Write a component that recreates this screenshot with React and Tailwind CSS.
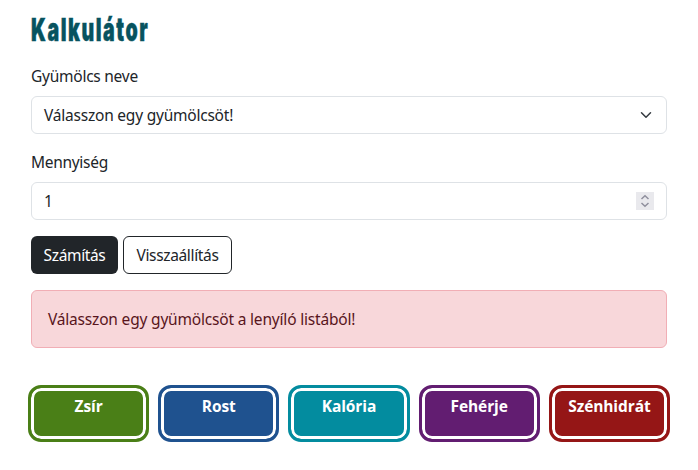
const nutrients = [
  { name: "Zsír", color: "border-[#4a7f17] bg-[#4a7f17]" },
  { name: "Rost", color: "border-[#1f528f] bg-[#1f528f]" },
  { name: "Kalória", color: "border-[#038c9f] bg-[#038c9f]" },
  { name: "Fehérje", color: "border-[#621d71] bg-[#621d71]" },
  { name: "Szénhidrát", color: "border-[#951616] bg-[#951616]" },
];

function Chevron() {
  return (
    <svg width="12" height="12" viewBox="0 0 16 16" fill="none" stroke="#343a40" strokeWidth="2" strokeLinecap="round" strokeLinejoin="round">
      <path d="m2 5 6 6 6-6" />
    </svg>
  );
}

function Stepper() {
  return (
    <span className="flex h-[18px] w-[18px] items-center justify-center bg-[#e9e9ed]">
      <svg width="10" height="14" viewBox="0 0 10 14" fill="none" stroke="#8f8f9d" strokeWidth="1.5">
        <path d="M1.5 5 5 1.8 8.5 5M1.5 9 5 12.2 8.5 9" />
      </svg>
    </span>
  );
}

export default function App() {
  return (
    <main className="h-[470px] w-[698px] overflow-hidden bg-white pl-[31px] pr-[31px] pt-[11px] font-['Noto_Sans','Open_Sans',sans-serif] text-[15.5px] leading-6 tracking-[-0.22px] text-[#212529]">
      <h1 className="h-[38px] w-max origin-left scale-x-[0.61] whitespace-nowrap font-['Inter',sans-serif] text-[32px] font-black leading-[38px] tracking-[2.6px] text-[#07535f] [-webkit-text-stroke:0.5px_#07535f]">
        Kalkulátor
      </h1>
      <div className="mt-[15px]">
        <label className="block tracking-[-0.25px]"><span>Gyümölcs neve</span></label>
        <div className="mt-2 flex h-[38px] items-center justify-between rounded-md border border-[#dee2e6] pl-3 pr-[14px]">
          <span>Válasszon egy gyümölcsöt!</span>
          <Chevron />
        </div>
      </div>
      <div className="mt-4">
        <label className="block tracking-[-0.3px]"><span>Mennyiség</span></label>
        <div className="mt-2 flex h-[38px] items-center justify-between rounded-md border border-[#dee2e6] px-3">
          <span>1</span>
          <Stepper />
        </div>
      </div>
      <div className="mt-4 flex gap-[5px] tracking-[-0.35px]">
        <button className="h-[38px] w-[87px] whitespace-nowrap rounded-md bg-[#212529] text-white"><span>Számítás</span></button>
        <button className="h-[38px] w-[109px] whitespace-nowrap rounded-md border border-[#212529]"><span>Visszaállítás</span></button>
      </div>
      <div className="mt-4 flex h-[58px] items-center rounded-md border border-[#f1aeb5] bg-[#f8d7da] px-4 tracking-[-0.19px] text-[#58151c]">
        <span>Válasszon egy gyümölcsöt a lenyíló listából!</span>
      </div>
      <div className="-mx-[3px] mt-[37px] grid grid-cols-5 gap-[9px]">
        {nutrients.map((n) => (
          <div
            key={n.name}
            className={`h-[57px] rounded-[13px] border-3 text-center font-['Open_Sans',sans-serif] text-[15.5px] font-bold leading-6 tracking-[-0.1px] text-white shadow-[inset_0_0_0_3px_white] ${n.color}`}
          >
            <div className="pt-[6px]"><span>{n.name}</span></div>
          </div>
        ))}
      </div>
    </main>
  );
}
